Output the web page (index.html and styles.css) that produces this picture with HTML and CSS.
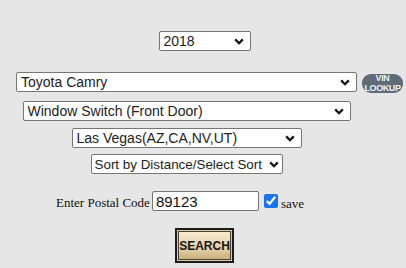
FILE: index.html
```html
<!DOCTYPE html>
<html lang="en">
<head>
    <meta charset="UTF-8">
    <title>Part Search</title>
    <link rel="stylesheet" href="styles.css">
</head>
<body>
    <form class="search-form">
        <div class="row row-year">
            <select class="sel sel-year">
                <option>2018</option>
            </select>
        </div>

        <div class="row row-model">
            <select class="sel sel-model">
                <option>Toyota Camry</option>
            </select>
            <a class="vin-btn" href="#">VIN<br>LOOKUP</a>
        </div>

        <div class="row row-part">
            <select class="sel sel-part">
                <option>Window Switch (Front Door)</option>
            </select>
        </div>

        <div class="row row-loc">
            <select class="sel sel-loc">
                <option>Las Vegas(AZ,CA,NV,UT)</option>
            </select>
        </div>

        <div class="row row-sort">
            <select class="sel sel-sort">
                <option>Sort by Distance/Select Sort</option>
            </select>
        </div>

        <div class="row row-zip">
            <label class="zip-label" for="zip">Enter Postal Code</label>
            <input type="text" id="zip" class="zip-input" value="89123">
            <input type="checkbox" id="save" class="save-box" checked>
            <label class="save-label" for="save">save</label>
        </div>

        <div class="row row-search">
            <button type="button" class="search-btn">SEARCH</button>
        </div>
    </form>
</body>
</html>
```

FILE: styles.css
```css
body {
    margin: 0;
    background: #e6e6e6;
    font-family: "Liberation Sans", Arial, sans-serif;
}
.search-form {
    width: 406px;
    padding-top: 31px;
}
.row {
    display: flex;
    justify-content: center;
    align-items: center;
}
.sel {
    box-sizing: border-box;
    height: 20px;
    padding: 0 18px 0 4px;
    -webkit-appearance: none;
    appearance: none;
    font-family: "Liberation Sans", Arial, sans-serif;
    font-size: 14px;
    color: #222;
    border: 1px solid #767676;
    border-radius: 2px;
    background: #fff url("data:image/svg+xml,%3Csvg xmlns='http://www.w3.org/2000/svg' width='10' height='7' viewBox='0 0 10 7'%3E%3Cpath d='M1.2 1.4L5 5.2l3.8-3.8' fill='none' stroke='%23111' stroke-width='2.3'/%3E%3C/svg%3E") no-repeat right 6px center;
}
.sel-year {
    width: 92px;
}
.row-year {
    padding-left: 3px;
}
.row-model {
    justify-content: flex-start;
    margin-top: 20px;
    padding-left: 16px;
}
.sel-model {
    width: 341px;
}
.vin-btn {
    box-sizing: border-box;
    width: 41px;
    height: 19px;
    margin: 3px 0 0 5px;
    padding-top: 0;
    border-radius: 9px;
    background: #5f6b79;
    color: #eef2f6;
    font-size: 9px;
    font-weight: bold;
    line-height: 9.5px;
    text-align: center;
    text-decoration: none;
    letter-spacing: -0.4px;
}
.row-part,
.row-loc,
.row-sort {
    padding-right: 33px;
}
.row-part {
    margin-top: 8px;
}
.sel-part {
    width: 328px;
}
.row-loc {
    margin-top: 7px;
}
.sel-loc {
    width: 230px;
}
.row-sort {
    margin-top: 6px;
}
.sel-sort {
    width: 192px;
    padding: 0 12px 0 3px;
    font-size: 13.4px;
    background-position: right 3px center;
}
.row-zip {
    justify-content: flex-start;
    margin-top: 16px;
    padding-left: 56px;
}
.zip-label {
    font-family: "Liberation Serif", "Times New Roman", serif;
    font-size: 13px;
    color: #111;
    margin-top: 4px;
}
.zip-input {
    box-sizing: border-box;
    width: 107px;
    height: 20px;
    margin: 0 0 0 2px;
    padding: 0 3px;
    font-family: "Liberation Sans", Arial, sans-serif;
    font-size: 15px;
    color: #111;
    border: 1px solid #767676;
    border-radius: 2px;
}
.save-box {
    width: 14px;
    height: 14px;
    margin: 0 3px 0 5px;
    accent-color: #1a73e8;
}
.save-label {
    font-family: "Liberation Serif", "Times New Roman", serif;
    font-size: 13px;
    color: #111;
    margin-top: 6px;
}
.row-search {
    margin-top: 16px;
    padding-left: 3px;
}
.search-btn {
    width: 59px;
    height: 35px;
    padding: 0;
    border: 2px solid #1c1c1c;
    box-shadow: inset 0 0 0 1px #d9c89a, inset 0 0 0 2px #4a4232;
    background: linear-gradient(#fbefd4, #e0cba2 65%, #c4a874);
    font-family: "Liberation Sans", Arial, sans-serif;
    font-size: 12px;
    font-weight: bold;
    color: #161616;
}
```
